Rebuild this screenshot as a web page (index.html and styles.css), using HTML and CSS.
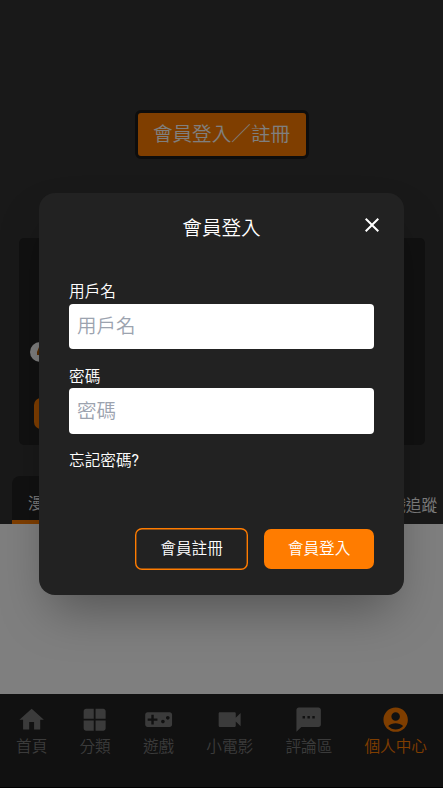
FILE: index.html
```html
<!DOCTYPE html>
<html lang="zh-Hant">
<head>
<meta charset="utf-8">
<meta name="viewport" content="width=device-width, initial-scale=1">
<title>會員登入</title>
<link rel="stylesheet" href="styles.css">
</head>
<body>
<div class="page">
  <header class="profile">
    <button class="profile-login">會員登入／註冊</button>
    <section class="card">
      <span class="coin"><svg viewBox="0 0 20 20"><path d="M9 5h5v8H7v-3z"/></svg></span>
      <span class="chip"></span>
    </section>
    <div class="tabs">
      <div class="tab active">漫畫追蹤</div>
      <div class="tab">遊戲追蹤</div>
    </div>
  </header>
  <main class="content"></main>
  <nav class="nav">
    <a class="nav-item"><svg viewBox="0 0 24 24"><path d="M10 20v-6h4v6h5v-8h3L12 3 2 12h3v8z"/></svg>首頁</a>
    <a class="nav-item"><svg viewBox="0 0 24 24"><path d="M11.250 11.250H3V5c0-1.100.9-2 2-2h6.250zM12.750 11.250H21V5c0-1.100-.9-2-2-2h-6.250zM11.250 12.750H3V19c0 1.100.9 2 2 2h6.250zM12.750 12.750V21H19c1.100 0 2-.9 2-2v-6.250z"/></svg>分類</a>
    <a class="nav-item"><svg viewBox="0 0 24 24"><path d="M21 6H3c-1.100 0-2 .9-2 2v8c0 1.100.9 2 2 2h18c1.100 0 2-.9 2-2V8c0-1.100-.9-2-2-2zm-10 7H8v3H6v-3H3v-2h3V8h2v3h3v2zm4.500 2c-.83 0-1.500-.67-1.500-1.500s.67-1.500 1.500-1.500 1.500.67 1.500 1.500-.67 1.500-1.500 1.500zm4-3c-.83 0-1.500-.67-1.500-1.500S18.670 9 19.500 9s1.500.67 1.500 1.500-.67 1.500-1.500 1.500z"/></svg>遊戲</a>
    <a class="nav-item"><svg viewBox="0 0 24 24"><path d="M17 10.500V7c0-.55-.45-1-1-1H4c-.55 0-1 .45-1 1v10c0 .55.45 1 1 1h12c.55 0 1-.45 1-1v-3.500l4 4v-11l-4 4z"/></svg>小電影</a>
    <a class="nav-item"><svg viewBox="0 0 24 24"><path d="M20 2H4c-1.100 0-2 .9-2 2v18l4-4h14c1.100 0 2-.9 2-2V4c0-1.100-.9-2-2-2zM9 11H7V9h2v2zm4 0h-2V9h2v2zm4 0h-2V9h2v2z"/></svg>評論區</a>
    <a class="nav-item current"><svg viewBox="0 0 24 24"><path d="M12 2C6.480 2 2 6.480 2 12s4.480 10 10 10 10-4.480 10-10S17.520 2 12 2zm0 4c1.930 0 3.500 1.570 3.500 3.500S13.930 13 12 13s-3.500-1.570-3.500-3.500S10.070 6 12 6zm0 14c-2.030 0-4.430-.82-6.140-2.880C7.550 15.800 9.680 15 12 15s4.450.8 6.140 2.120C16.430 19.180 14.030 20 12 20z"/></svg>個人中心</a>
  </nav>
</div>
<div class="overlay">
  <form class="modal">
    <h2 class="modal-title">會員登入</h2>
    <button type="button" class="close" aria-label="關閉"><svg viewBox="0 0 24 24"><path d="M19 6.410 17.590 5 12 10.590 6.410 5 5 6.410 10.590 12 5 17.590 6.410 19 12 13.410 17.590 19 19 17.590 13.410 12z"/></svg></button>
    <label class="field">用戶名<input type="text" placeholder="用戶名"></label>
    <label class="field">密碼<input type="password" placeholder="密碼"></label>
    <a class="forgot">忘記密碼<span class="latin">?</span></a>
    <div class="actions">
      <button type="button" class="btn outline">會員註冊</button>
      <button type="button" class="btn primary">會員登入</button>
    </div>
  </form>
</div>
</body>
</html>
```
FILE: styles.css
```css
* { box-sizing: border-box; }
body {
  margin: 0;
  font-family: "Noto Sans CJK TC", sans-serif;
  font-size: 15.63px;
  font-weight: 350;
  line-height: 23.45px;
}
button, input { font: inherit; }
svg { display: block; fill: currentColor; }

.page { height: 788px; display: flex; flex-direction: column; overflow: hidden; }
.profile {
  height: 524px;
  flex: none;
  padding-top: 110px;
  background: #333;
  display: flex;
  flex-direction: column;
}
.profile-login {
  align-self: center;
  width: 174px;
  height: 49px;
  padding: 0 0 3px;
  border: 3px solid #1a1a1a;
  border-radius: 6px;
  background: #ff7c00;
  color: #fff;
  font-size: 19.6px;
}
.card {
  height: 207px;
  margin: 79px 18px 0 19px;
  padding: 104px 0 0 11px;
  border-radius: 5px;
  background: #222;
}
.coin {
  display: block;
  width: 20px;
  height: 20px;
  border-radius: 50%;
  background: #fff;
  color: #b05800;
}
.chip {
  display: block;
  width: 80px;
  height: 31px;
  margin: 36px 0 0 4px;
  border-radius: 7px;
  background: #ff7c00;
}
.tabs {
  margin-top: 31px;
  height: 48px;
  padding: 0 6px 0 12px;
  display: flex;
  justify-content: space-between;
  color: #fff;
}
.tab { padding-top: 17px; white-space: nowrap; }
.tab.active {
  padding: 15px 16px 0;
  border-bottom: 4px solid #ff7c00;
  border-radius: 8px 8px 0 0;
  background: #222;
}
.content { flex: 1; background: #fff; }
.nav {
  height: 94px;
  flex: none;
  padding: 11px 16px 0;
  display: flex;
  justify-content: space-between;
  background: #222;
  border-bottom: 1px solid #000;
  color: #777;
}
.nav-item { display: flex; flex-direction: column; align-items: center; height: 53px; }
.nav-item svg { width: 29.3px; height: 29.3px; margin-bottom: -.8px; }
.nav-item.current { color: #ff7c00; }

.overlay {
  position: absolute;
  inset: 0;
  height: 788px;
  display: flex;
  align-items: center;
  justify-content: center;
  background: rgba(0, 0, 0, .5);
}
.modal {
  position: relative;
  width: 365px;
  height: 402px;
  padding: 19px 30px 0;
  border-radius: 16px;
  background: #222;
  color: #fff;
  box-shadow: 0 25px 50px -12px rgba(0, 0, 0, .35);
}
.modal-title {
  margin: 0 0 38px;
  font-size: 19.6px;
  font-weight: 350;
  line-height: 29.4px;
  text-align: center;
}
.close {
  position: absolute;
  top: 20px;
  right: 20px;
  width: 24px;
  height: 24px;
  padding: 0;
  border: 0;
  background: none;
  color: #fff;
}
.field { display: block; margin-bottom: 14.9px; }
.field input {
  display: block;
  width: 100%;
  height: 45.4px;
  margin-top: .8px;
  padding: 0 8px 3px;
  border: 0;
  border-radius: 4px;
  background: #fff;
  font-size: 19.55px;
}
.field input::placeholder { color: #9ca3af; opacity: 1; }
.forgot { display: block; height: 23.45px; }
.latin { font-family: Roboto, sans-serif; font-weight: 400; }
.actions { margin-top: 56px; display: flex; justify-content: flex-end; align-items: center; gap: 16px; }
.btn { padding: 0 0 2px; border: 0; border-radius: 7px; color: #fff; width: 110px; height: 40px; }
.outline { width: 113px; height: 42px; box-shadow: inset 0 0 0 1.4px #ff7c00; background: none; }
.primary { background: #ff7c00; }
```
